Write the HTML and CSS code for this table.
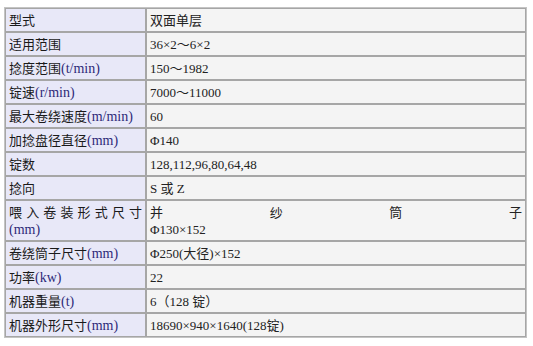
FILE: index.html
```html
<!DOCTYPE html>
<html lang="zh-CN">
<head>
<meta charset="utf-8">
<title>参数</title>
<link rel="stylesheet" href="styles.css">
</head>
<body>
<div class="wrap">
<table class="spec">
  <tr><td class="k">型式</td><td class="v">双面单层</td></tr>
  <tr><td class="k">适用范围</td><td class="v">36×2～6×2</td></tr>
  <tr><td class="k">捻度范围<span class="u">(t/min)</span></td><td class="v">150～1982</td></tr>
  <tr><td class="k">锭速<span class="u">(r/min)</span></td><td class="v">7000～11000</td></tr>
  <tr><td class="k">最大卷绕速度<span class="u">(m/min)</span></td><td class="v">60</td></tr>
  <tr><td class="k">加捻盘径直径<span class="u">(mm)</span></td><td class="v">Φ140</td></tr>
  <tr><td class="k">锭数</td><td class="v">128,112,96,80,64,48</td></tr>
  <tr><td class="k">捻向</td><td class="v">S 或 Z</td></tr>
  <tr><td class="k"><span class="just">喂入卷装形式尺寸</span><span class="u">(mm)</span></td><td class="v"><span class="just">并纱筒子</span>Φ130×152</td></tr>
  <tr><td class="k">卷绕筒子尺寸<span class="u">(mm)</span></td><td class="v">Φ250(大径)×152</td></tr>
  <tr><td class="k">功率<span class="u">(kw)</span></td><td class="v">22</td></tr>
  <tr><td class="k">机器重量<span class="u">(t)</span></td><td class="v">6（128 锭）</td></tr>
  <tr><td class="k">机器外形尺寸<span class="u">(mm)</span></td><td class="v">18690×940×1640(128锭)</td></tr>
</table>
</div>
</body>
</html>
```

FILE: styles.css
```css
html, body {
  margin: 0;
  padding: 0;
  background: #ffffff;
}

.wrap {
  padding: 7px 0 0 4px;
}

.spec {
  width: 523px;
  border-collapse: separate;
  border-spacing: 0;
  border: 1px solid #c4c4c4;
  font-family: "Liberation Serif", "Noto Sans CJK SC", serif;
  font-size: 13px;
  line-height: 17px;
  color: #1a1a1a;
}

.spec td {
  border: 1px solid #a6a6a6;
  padding: 3px 3px 2px 3px;
  vertical-align: top;
  text-align: left;
}

.spec .k {
  width: 133px;
  background: #e8e8f8;
}

.spec .v {
  background: #f4f4f4;
  color: #222222;
}

.u {
  font-size: 14px;
  color: #2e2a78;
}

.just {
  display: block;
  text-align: justify;
  text-align-last: justify;
}
```
